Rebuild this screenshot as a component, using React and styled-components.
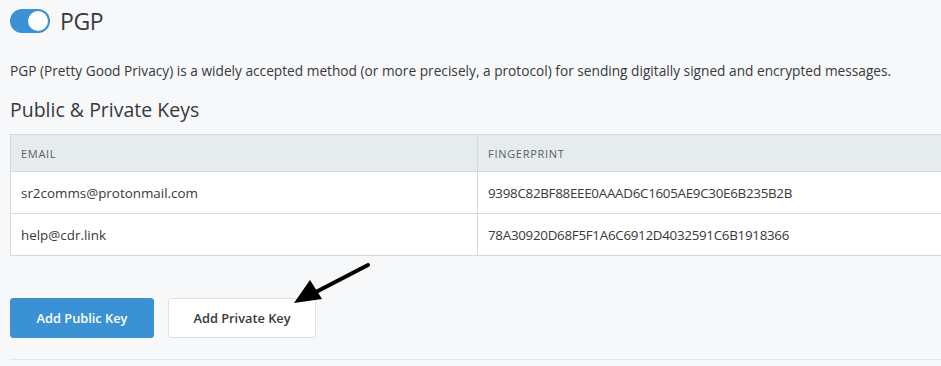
import React from 'react';
import styled, { createGlobalStyle } from 'styled-components';

const Global = createGlobalStyle`
  html, body {
    margin: 0;
    padding: 0;
    background: #f6f8f9;
    font-family: "Open Sans", "Liberation Sans", sans-serif;
    color: #38393b;
    overflow: hidden;
  }
`;

const Page = styled.div`
  position: relative;
  width: 941px;
  height: 366px;
  padding: 9px 0 0 10px;
  box-sizing: border-box;
`;

const TitleRow = styled.div`
  display: flex;
  align-items: center;
  gap: 10px;
  height: 24px;
`;

const Toggle = styled.div`
  width: 40px;
  height: 24px;
  border-radius: 12px;
  background: #3b91d5;
  position: relative;
  &::after {
    content: '';
    position: absolute;
    right: 2px;
    top: 2px;
    width: 20px;
    height: 20px;
    border-radius: 50%;
    background: #fff;
  }
`;

const Title = styled.h1`
  margin: 0;
  font-size: 23px;
  font-weight: 400;
  color: #3a3b3d;
  letter-spacing: -0.4px;
`;

const Description = styled.p`
  margin: 29px 0 0;
  font-size: 13.7px;
  line-height: 18px;
`;

const Heading = styled.h2`
  margin: 16px 0 0;
  font-size: 19.5px;
  font-weight: 400;
  line-height: 28px;
`;

const Table = styled.table`
  margin-top: 10px;
  width: 960px;
  border-collapse: collapse;
  background: #fff;
  font-size: 13.4px;
`;

const Th = styled.th`
  background: #e6ebee;
  border: 1px solid #d5d9dc;
  height: 36px;
  padding: 0 10px;
  text-align: left;
  font-size: 11px;
  font-weight: 400;
  letter-spacing: 0.7px;
  color: #5b5f63;
  width: ${p => p.$w || 'auto'};
`;

const Td = styled.td`
  border: 1px solid #d5d9dc;
  height: 41px;
  padding: 0 10px;
  letter-spacing: ${p => (p.$mono ? '-0.3px' : '0')};
`;

const Actions = styled.div`
  display: flex;
  gap: 14px;
  margin-top: 42px;
`;

const Button = styled.button`
  height: 40px;
  padding: 0;
  border-radius: 3px;
  font-family: inherit;
  font-size: 12.8px;
  font-weight: 600;
  border: 1px solid ${p => (p.$primary ? '#3a8fd1' : '#dde1e4')};
  background: ${p => (p.$primary ? '#3a92d5' : '#fff')};
  color: ${p => (p.$primary ? '#fff' : '#38393b')};
  width: ${p => p.$w};
`;

const Rule = styled.div`
  margin-top: 21px;
  height: 1px;
  background: #e2e6e9;
`;

const Arrow = styled.svg`
  position: absolute;
  left: 280px;
  top: 258px;
`;

export default function App() {
  return (
    <Page>
      <Global />
      <TitleRow>
        <Toggle />
        <Title>PGP</Title>
      </TitleRow>
      <Description>
        PGP (Pretty Good Privacy) is a widely accepted method (or more precisely, a protocol) for sending digitally signed and encrypted messages.
      </Description>
      <Heading>Public &amp; Private Keys</Heading>
      <Table>
        <thead>
          <tr>
            <Th $w="446px">EMAIL</Th>
            <Th>FINGERPRINT</Th>
          </tr>
        </thead>
        <tbody>
          <tr>
            <Td>sr2comms@protonmail.com</Td>
            <Td $mono>9398C82BF88EEE0AAAD6C1605AE9C30E6B235B2B</Td>
          </tr>
          <tr>
            <Td>help@cdr.link</Td>
            <Td $mono>78A30920D68F5F1A6C6912D4032591C6B1918366</Td>
          </tr>
        </tbody>
      </Table>
      <Actions>
        <Button $primary $w="144px">Add Public Key</Button>
        <Button $w="148px">Add Private Key</Button>
      </Actions>
      <Rule />
      <Arrow width="100" height="60" viewBox="0 0 100 60">
        <line x1="88" y1="7" x2="34" y2="35" stroke="#000" strokeWidth="4" strokeLinecap="round" />
        <polygon points="14,45 30,22 42,41" fill="#000" />
      </Arrow>
    </Page>
  );
}
